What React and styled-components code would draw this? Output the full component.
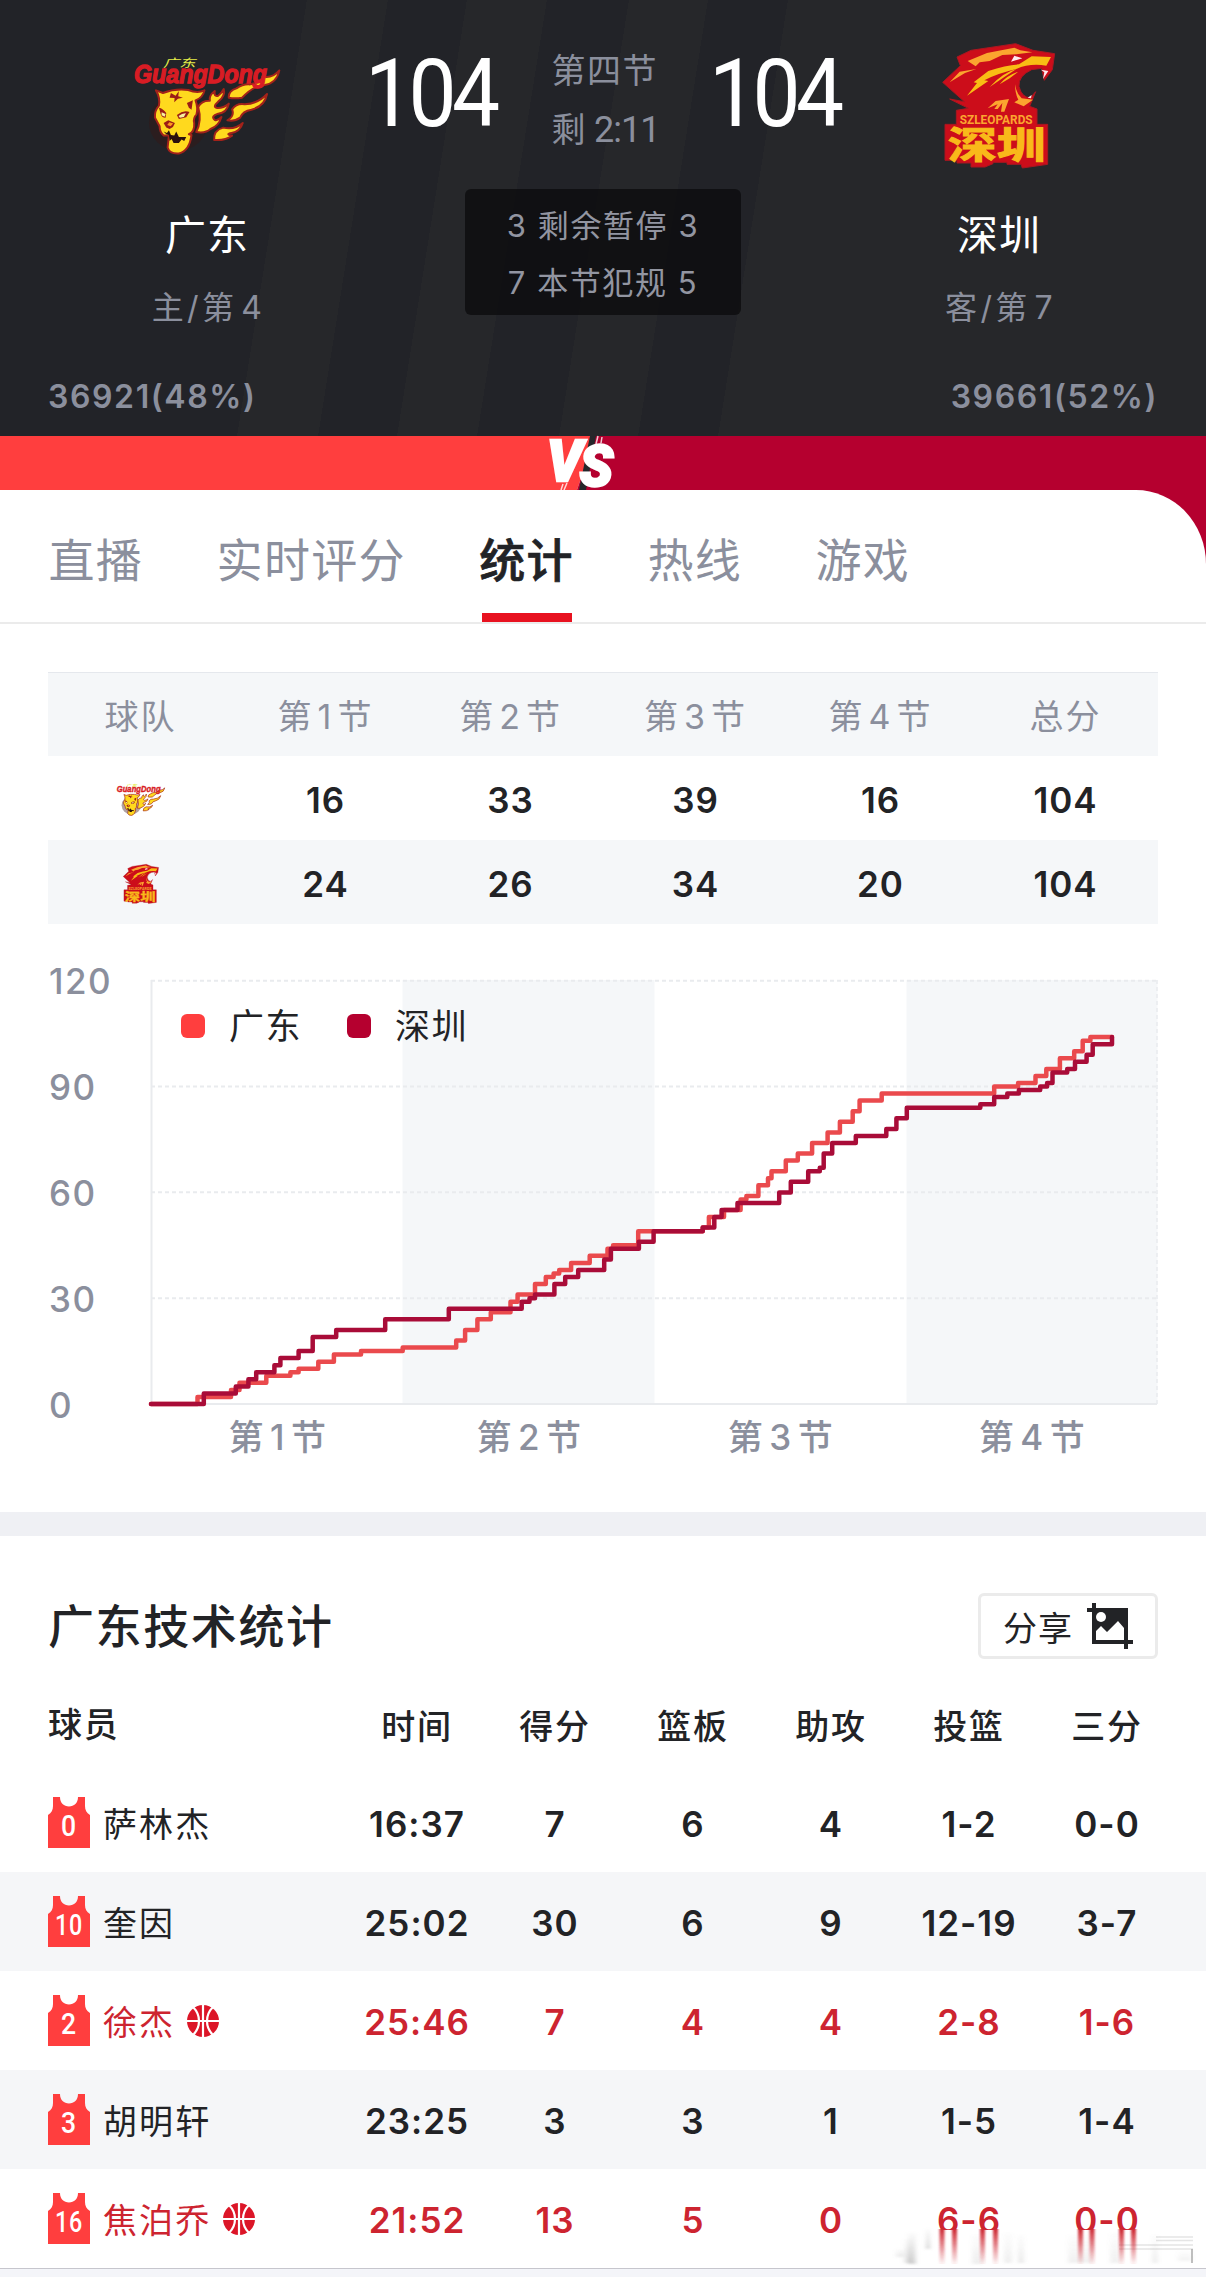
import React from 'react';
import styled, { createGlobalStyle } from 'styled-components';

const GlobalStyle = createGlobalStyle`
  * {
    box-sizing: border-box;
  }

  body {
    margin: 0;
    background: #ffffff;
    color: #222326;
    font-family: Inter, "Noto Sans CJK SC", sans-serif;
  }

  svg {
    overflow: visible;
  }
`;

const GREY = '#8b8f9d';
const HOME = '#ff3e3e';
const AWAY = '#b5002f';

const quarters = [
  { team: 'home', scores: [16, 33, 39, 16, 104] },
  { team: 'away', scores: [24, 26, 34, 20, 104] },
];

const players = [
  { no: 0, name: '萨林杰', stats: ['16:37', '7', '6', '4', '1-2', '0-0'] },
  { no: 10, name: '奎因', stats: ['25:02', '30', '6', '9', '12-19', '3-7'] },
  { no: 2, name: '徐杰', onCourt: true, stats: ['25:46', '7', '4', '4', '2-8', '1-6'] },
  { no: 3, name: '胡明轩', stats: ['23:25', '3', '3', '1', '1-5', '1-4'] },
  { no: 16, name: '焦泊乔', onCourt: true, stats: ['21:52', '13', '5', '0', '6-6', '0-0'] },
];

// [x, score] at every change of score
const homeRun = [
  [46.5, 2], [80, 4], [88.5, 6], [115.3, 8], [139.4, 9], [147.6, 10], [167.3, 12], [182.9, 14],
  [210, 15], [251.7, 16], [305.2, 18], [314.1, 21], [326.4, 24], [339.8, 26], [359.5, 29],
  [366.6, 31], [384, 34], [394.8, 36], [402.6, 37], [408.2, 38], [420.1, 40], [438.7, 42],
  [456.5, 44], [462.1, 45], [487.2, 49], [551.7, 50], [557.9, 53], [573, 55], [589.6, 58],
  [595.4, 59], [607.4, 62], [617, 64], [620.5, 66], [634.8, 69], [646.8, 71], [661.1, 74],
  [676.6, 77], [688.9, 80], [701.7, 83], [708.6, 86], [730.7, 88], [843.2, 90], [867.1, 91],
  [884.5, 93], [895.3, 95], [908.9, 98], [923.2, 100], [931.7, 103], [939.4, 104], [961, 104],
];

const awayRun = [
  [52.8, 3], [84.8, 5], [97.4, 7], [105.2, 9], [123.4, 11], [129.4, 13], [147.6, 15], [161.7, 19],
  [185.2, 21], [234.2, 24], [297.8, 27], [370.7, 29], [378.5, 30], [384, 31], [403.4, 34],
  [414.2, 36], [427.2, 38], [453.2, 41], [459.9, 44], [487.9, 46], [502.6, 49], [551.7, 50],
  [563.3, 53], [570.6, 55], [586.5, 57], [628.2, 60], [639.8, 63], [657.2, 66], [668.8, 67],
  [672.7, 71], [681.2, 74], [704.8, 76], [735.3, 78], [745.4, 81], [755.8, 84], [829.3, 85],
  [843.2, 87], [856.3, 88], [867.9, 89], [889.2, 90], [896.1, 91], [901.5, 94], [916.2, 95],
  [924, 97], [935.6, 99], [941.7, 102], [961, 104],
];

const scoreY = (score) => 424 - score * 3.5275;

const stepPath = (run) =>
  'M0 424' + run.map(([x, score]) => `H${x}V${scoreY(score).toFixed(1)}`).join('');

const HomeLogo = ({ width, height }) => (
  <svg width={width} height={height} viewBox="400 165 436 297">
    <ellipse cx="530" cy="365" rx="88" ry="84" fill="#3a1512" opacity="0.4" />
    <text x="484" y="197" fontSize="34" fontStyle="italic" textLength="98" lengthAdjust="spacingAndGlyphs"
      fill="#e6ee48" fontFamily="'Noto Sans CJK SC', sans-serif">广东</text>
    <g fill="#ffd91e" stroke="#a3221a" strokeWidth="6" strokeLinejoin="round">
      <path d="M590 318Q600 298 625 299Q622 283 640 270Q636 288 650 284Q662 275 667 264Q672 286 650 302Q632 318 647 321Q665 322 682 308Q676 335 650 338Q626 346 640 357Q650 360 660 348Q652 375 627 384Q612 398 584 393Q602 360 590 318Z" />
      <path d="M682 290Q680 270 705 262Q725 248 746 250Q786 240 782 226Q812 234 834 208Q826 246 790 252Q756 254 722 290Q700 294 682 290Z" />
      <path d="M678 358Q700 345 692 325Q705 306 730 310Q770 308 797 279Q790 316 750 326Q724 330 716 350Q700 362 678 358Z" />
      <path d="M638 417Q636 388 665 380Q700 388 724 366Q716 392 690 396Q670 400 692 404Q670 420 638 417Z" />
      <path d="M463 268L484 276Q520 262 560 267Q588 278 609 268Q604 290 582 298Q590 320 585 340Q574 352 578 366Q580 392 562 400L570 402Q564 450 532 458Q504 460 498 440L502 404L486 404Q474 394 474 376L460 350Q458 330 472 314Q476 290 463 268Z" />
    </g>
    <g fill="#9b1d16">
      <path d="M508 276L522 284L532 270L530 286L544 290L529 293L518 304L519 291L504 290Z" />
      <path d="M472 320Q484 322 494 336L492 350Q480 350 477 338Z" />
      <path d="M526 342Q545 326 564 333L554 349L532 354Z" />
      <path d="M556 306L574 298L570 326L562 320Z" />
      <path d="M486 366L500 358L520 366L514 378L504 384L494 380Z" />
    </g>
    <path d="M480 334l12 5l-3 8l-9-4ZM531 345q12-9 22-8l-6 11l-12 2Z" fill="#f6f2a0" />
    <path d="M503 364l12 4l-8 8l-10-4Z" fill="#ff9a1e" />
    <path d="M486 392l10 4l6-8l6 14l10 2l6-12l8 16l22 0l-6 12l-8-4l-8 10l-16 0l-6-12l-6 6l-2-18l-8-2Z" fill="#2a0f0d" />
    <text x="397" y="247" fontSize="80" fontWeight="900" fontStyle="italic" textLength="400"
      lengthAdjust="spacingAndGlyphs" fill="#d81c24" stroke="#d81c24" strokeWidth="4"
      fontFamily="'Liberation Sans', sans-serif">GuangDong</text>
  </svg>
);

const AwayLogo = ({ width, height }) => (
  <svg width={width} height={height} viewBox="217 128 342 378">
    <path
      d="M219 246L272 196L262 170L304 150L438 130L490 150L555 160L548 208L524 240L516 204L486 208Q446 226 448 258Q456 292 482 292L498 274L480 318L502 326V372H534V492L458 503L454 492H412V486H370V490L346 500H304V488H262V480H226V372H260V330L296 324L240 296L284 304Z"
      fill="#cc0d1a" stroke="#a81720" strokeWidth="3"
    />
    <g fill="#fba52f">
      <path d="M294 182L352 158L434 142L452 150L488 156L440 162L398 164L360 182L330 186L318 198Z" />
      <path d="M240 246L270 214L320 206L286 218Z" />
      <path d="M354 324L378 302L418 296L404 334H394L398 308L384 326L374 326L384 312Z" />
      <path d="M436 252Q440 280 456 294L490 298L462 318L434 306L446 298Q436 280 436 252Z" />
    </g>
    <g fill="#f9bd14">
      <path d="M312 246L356 212Q410 194 448 192L486 168L544 170L530 196Q480 188 440 206Q380 220 344 240L356 242L292 286L322 248Z" />
      <path d="M360 260Q400 216 440 206L404 230ZM390 252Q410 226 446 214L420 234Z" />
    </g>
    <path d="M424 184L434 166L458 174L438 180ZM514 208L536 212L520 236L524 216ZM474 292L486 284L484 294Z" fill="#ffe9ee" />
    <text x="270" y="371" fontSize="41" fontWeight="700" textLength="219" lengthAdjust="spacingAndGlyphs"
      fill="#fba52f" fontFamily="Roboto, sans-serif">SZLEOPARDS</text>
    <text x="234" y="476" fontSize="112" fontWeight="700" textLength="294" lengthAdjust="spacingAndGlyphs"
      fill="#f9b91a" stroke="#f9b91a" strokeWidth="3" fontFamily="'Noto Sans CJK SC', sans-serif">深圳</text>
  </svg>
);

const Jersey = ({ no }) => (
  <svg width="42" height="51" viewBox="0 0 42 51">
    <path d="M5 0H12C12 6 16 9.500 21 9.500S30 6 30 0H37V9C37 13 38.500 16 42 18V51H0V18C3.500 16 5 13 5 9Z" fill={HOME} />
    <text x="21" y="39" fontSize="30" fontWeight="500" textAnchor="middle" fill="#ffffff"
      fontFamily="Roboto, sans-serif" textLength={no > 9 ? 28 : 16} lengthAdjust="spacingAndGlyphs">{no}</text>
  </svg>
);

const Basketball = () => (
  <svg width="32" height="32" viewBox="0 0 32 32">
    <circle cx="16" cy="16" r="16" fill="#dc1628" />
    <path d="M16 0V32M0 16H32M6 2C14 10 14 22 6 30M26 2C18 10 18 22 26 30" fill="none" stroke="#ffffff" strokeWidth="2.200" />
  </svg>
);

const ShareIcon = () => (
  <svg width="46" height="46" viewBox="0 0 46 46">
    <path d="M5 0H9V5H41V37H46V41H41V46H37V41H5V9H0V5H5Z" fill="#222326" />
    <ellipse cx="14" cy="14" rx="5" ry="5" fill="#ffffff" />
    <path d="M9 28L14 23L20 29L31 18L37 25V37H9Z" fill="#ffffff" />
  </svg>
);

const VsMark = () => (
  <svg width="66" height="54" viewBox="0 0 66 54">
    <path d="M0 0H45L27 54H0Z" fill={HOME} />
    <path d="M45 0H66V54H27Z" fill={AWAY} />
    <path d="M40 0H46L36 54H29Z" fill="#25262a" />
    <text x="-3" y="45" fontSize="58" fontWeight="900" fontStyle="italic" fill="#ffffff" stroke="#ffffff"
      strokeWidth="2.500" textLength="66" lengthAdjust="spacingAndGlyphs" fontFamily="Roboto, sans-serif">
      V<tspan dx="-3" dy="5">S</tspan>
    </text>
    <path d="M13 48L11 54M17 47L14 54M48 0L46 8M52 1L51 7" stroke="#ffffff" strokeWidth="1.500" opacity="0.8" />
  </svg>
);

const ScoreChart = () => (
  <svg width="1110" height="500" viewBox="-103 -20 1110 500">
    <rect x="251.500" y="0" width="252" height="424" fill="#f5f7f9" />
    <rect x="755.500" y="0" width="251" height="424" fill="#f5f7f9" />
    {[120, 90, 60, 30].map((s) => (
      <path key={s} d={`M0 ${scoreY(s)}H1006`} stroke="#e9ebee" strokeWidth="2" strokeDasharray="4 3" />
    ))}
    <path d="M1006 0V424" stroke="#e9ebee" strokeWidth="1.500" strokeDasharray="4 3" />
    <path d="M0.500 0V424H1006" fill="none" stroke="#e9ebee" strokeWidth="2" />
    {[120, 90, 60, 30, 0].map((s) => (
      <AxisText key={s} x="-102" y={scoreY(s) + 13.5}>{s}</AxisText>
    ))}
    {[1, 2, 3, 4].map((q) => (
      <AxisText key={q} x={251.5 * q - 124.5} y="470" textAnchor="middle">
        第<tspan dx="5">{q}</tspan><tspan dx="5">节</tspan>
      </AxisText>
    ))}
    <RunLine d={stepPath(homeRun)} stroke="#ea4a4d" />
    <RunLine d={stepPath(awayRun)} stroke="#a90c38" />
  </svg>
);

// fading streaks over the last two cells of the table
const Smear = () => (
  <svg width="310" height="40" viewBox="0 0 310 40">
    <defs>
      <linearGradient id="fadeRed" x1="0" y1="0" x2="0" y2="1">
        <stop offset="0" stopColor="#cf2a35" />
        <stop offset="1" stopColor="#cf2a35" stopOpacity="0.05" />
      </linearGradient>
      <linearGradient id="fadeGrey" x1="0" y1="0" x2="0" y2="1">
        <stop offset="0" stopColor="#999999" stopOpacity="0.05" />
        <stop offset="1" stopColor="#888888" stopOpacity="0.35" />
      </linearGradient>
      <filter id="soft"><feGaussianBlur stdDeviation="2 0.800" /></filter>
      <filter id="softRed"><feGaussianBlur stdDeviation="0.900 0.300" /></filter>
    </defs>
    <rect x="0" y="3" width="310" height="37" fill="#ffffff" />
    <g fill="url(#fadeGrey)" filter="url(#soft)">
      <rect x="2" y="22" width="8" height="8" opacity="0.5" />
      <rect x="10" y="12" width="8" height="24" opacity="0.6" />
      <rect x="14" y="6" width="8" height="31" />
      <rect x="32" y="2" width="4" height="20" />
      <rect x="78" y="8" width="10" height="29" opacity="0.4" />
      <rect x="110" y="6" width="8" height="30" opacity="0.4" />
      <rect x="124" y="8" width="6" height="28" opacity="0.5" />
      <rect x="174" y="8" width="24" height="28" opacity="0.35" />
      <rect x="216" y="6" width="10" height="30" opacity="0.35" />
      <rect x="258" y="8" width="6" height="28" opacity="0.4" />
      <rect x="284" y="24" width="14" height="10" opacity="0.3" />
    </g>
    <path d="M262 10H299M262 13.500H299M225 18H299M225 22H299" stroke="#999999" strokeOpacity="0.250" strokeWidth="1.500" />
    <path d="M298 22V36" stroke="#aaaaaa" strokeWidth="1.500" />
    <g fill="url(#fadeRed)" filter="url(#softRed)">
      {[45.5, 58, 86, 99, 184, 195.5, 225, 237].map((x) => (
        <rect key={x} x={x} y="2" width="5" height="35" />
      ))}
    </g>
  </svg>
);

const TeamInfo = ({ logo, name, side, rank }) => (
  <Team>
    <LogoSlot>{logo}</LogoSlot>
    <TeamName>{name}</TeamName>
    <TeamRank>{side}/第<Num>{rank}</Num></TeamRank>
  </Team>
);

export default function App() {
  return (
    <Page>
      <GlobalStyle />
      <Header>
        <Board>
          <TeamInfo logo={<HomeLogo width={145} height={99} />} name="广东" side="主" rank={4} />
          <Centre>
            <ScoreLine>
              <Score>104</Score>
              <Clock>
                <span>第四节</span>
                <span>剩 <Remaining>2:11</Remaining></span>
              </Clock>
              <Score>104</Score>
            </ScoreLine>
            <Fouls>
              <span>3 剩余暂停 3</span>
              <span>7 本节犯规 5</span>
            </Fouls>
          </Centre>
          <TeamInfo logo={<AwayLogo width={114} height={126} />} name="深圳" side="客" rank={7} />
        </Board>
        <Support>
          <span>36921(48%)</span>
          <span>39661(52%)</span>
        </Support>
      </Header>
      <VsBar>
        <VsSide $width={550} $color={HOME} />
        <VsMark />
        <VsSide $color={AWAY} />
      </VsBar>
      <TabsBack>
        <Tabs>
          <Tab>直播</Tab>
          <Tab>实时评分</Tab>
          <Tab $active>统计</Tab>
          <Tab>热线</Tab>
          <Tab>游戏</Tab>
        </Tabs>
      </TabsBack>
      <Overview>
        <QuarterTable>
          <QuarterRow $head>
            <QuarterHead>球队</QuarterHead>
            {[1, 2, 3, 4].map((q) => (
              <QuarterHead key={q}>第<Num>{q}</Num>节</QuarterHead>
            ))}
            <QuarterHead>总分</QuarterHead>
          </QuarterRow>
          {quarters.map(({ team, scores }) => (
            <QuarterRow key={team} $shaded={team === 'away'}>
              <QuarterCell>
                {team === 'home' ? <HomeLogo width={48} height={33} /> : <AwayLogo width={36} height={40} />}
              </QuarterCell>
              {scores.map((score, i) => (
                <QuarterCell key={i}>{score}</QuarterCell>
              ))}
            </QuarterRow>
          ))}
        </QuarterTable>
        <ChartBox>
          <ScoreChart />
          <Legend>
            <LegendItem><Swatch $color={HOME} />广东</LegendItem>
            <LegendItem><Swatch $color={AWAY} />深圳</LegendItem>
          </Legend>
        </ChartBox>
      </Overview>
      <Divider />
      <StatsHead>
        <Title>广东技术统计</Title>
        <ShareButton>分享<ShareIcon /></ShareButton>
      </StatsHead>
      <PlayerHead>
        <span>球员</span>
        {['时间', '得分', '篮板', '助攻', '投篮', '三分'].map((t) => (
          <StatCell key={t}>{t}</StatCell>
        ))}
      </PlayerHead>
      {players.map((p, i) => (
        <PlayerRow key={p.no} $shaded={i % 2 === 1} $onCourt={p.onCourt}>
          <Player>
            <Jersey no={p.no} />
            <PlayerName>{p.name}</PlayerName>
            {p.onCourt && <Basketball />}
          </Player>
          {p.stats.map((s, j) => (
            <StatCell key={j}>{s}</StatCell>
          ))}
          {i === players.length - 1 && <SmearSlot><Smear /></SmearSlot>}
        </PlayerRow>
      ))}
      <Footer />
    </Page>
  );
}

const Page = styled.div`
  width: 1206px;
  height: 2277px;
  overflow: hidden;
  background: #ffffff;
`;

const Header = styled.header`
  height: 436px;
  background: linear-gradient(
    99.1deg,
    #222328 303px,
    #26272a 303px 383px,
    #222328 383px 461px,
    #26272a 461px 540px,
    #222328 540px 621px,
    #26272a 621px 699px,
    #222328 699px 778px,
    #26272a 778px
  );
`;

const Board = styled.div`
  display: grid;
  grid-template-columns: 318px minmax(0, 1fr) 318px;
  padding: 0 48px;
  height: 370px;
`;

const Team = styled.div`
  display: flex;
  flex-direction: column;
  align-items: center;
  padding-top: 36px;
`;

const LogoSlot = styled.div`
  display: flex;
  align-items: center;
  height: 139px;
`;

const TeamName = styled.div`
  margin-top: 30px;
  line-height: 60px;
  font-size: 41px;
  letter-spacing: 1px;
  color: #ffffff;
`;

const TeamRank = styled.div`
  margin-top: 23px;
  padding-left: 7px;
  line-height: 40px;
  font-size: 32px;
  letter-spacing: 3.3px;
  color: ${GREY};
`;

const Num = styled.span`
  margin: 0 4px;
`;

const Centre = styled.div`
  display: flex;
  flex-direction: column;
  align-items: center;
`;

const ScoreLine = styled.div`
  display: flex;
  justify-content: center;
  gap: 53px;
  height: 189px;
  padding: 41px 3px 0 0;
`;

const Score = styled.div`
  width: 130px;
  line-height: 106px;
  font-family: Roboto, sans-serif;
  font-size: 94px;
  letter-spacing: -5px;
  color: #ffffff;
  transform: scaleX(0.91);
  transform-origin: left;
`;

const Clock = styled.div`
  display: flex;
  flex-direction: column;
  line-height: 59px;
  margin-right: -4px;
  padding-left: 4px;
  font-size: 34px;
  letter-spacing: 1.5px;
  white-space: nowrap;
  color: ${GREY};
`;

const Remaining = styled.span`
  margin-left: -4px;
  font-family: Roboto, sans-serif;
  font-size: 36px;
  letter-spacing: -1px;
`;

const Fouls = styled.div`
  display: flex;
  flex-direction: column;
  align-items: center;
  width: 276px;
  height: 126px;
  padding-top: 8px;
  border-radius: 6px;
  background: rgba(8, 8, 10, 0.7);
  line-height: 57px;
  font-size: 31px;
  letter-spacing: 1.6px;
  color: #9295a1;
`;

const Support = styled.div`
  display: flex;
  justify-content: space-between;
  padding: 7px 48px 0 48px;
  line-height: 40px;
  font-size: 32px;
  font-weight: 600;
  letter-spacing: 1.6px;
  color: ${GREY};
`;

const VsBar = styled.div`
  display: flex;
  height: 54px;
`;

const VsSide = styled.div`
  flex: ${(p) => (p.$width ? `0 0 ${p.$width}px` : '1')};
  background: ${(p) => p.$color};
`;

const TabsBack = styled.div`
  background: ${AWAY};
`;

const Tabs = styled.nav`
  display: flex;
  gap: 73.5px;
  height: 134px;
  padding-left: 48.5px;
  border-bottom: 2px solid #ebebeb;
  border-top-right-radius: 70px 74px;
  background: #ffffff;
`;

const Tab = styled.div`
  height: 132px;
  line-height: 140px;
  font-size: 46px;
  letter-spacing: 1.3px;
  font-weight: ${(p) => (p.$active ? 500 : 400)};
  color: ${(p) => (p.$active ? '#222326' : GREY)};

  ${(p) => p.$active && `
    -webkit-text-stroke: 0.7px #222326;
    background: linear-gradient(#e81220, #e81220) center bottom / 90px 9px no-repeat;
  `}
`;

const Overview = styled.section`
  height: 888px;
  padding: 48px 48px 0;
`;

const QuarterTable = styled.div`
  display: flex;
  flex-direction: column;
`;

const QuarterRow = styled.div`
  display: grid;
  grid-template-columns: repeat(6, 1fr);
  align-items: center;
  height: 84px;
  border-top: ${(p) => (p.$head ? '1px solid #e5e8ed' : 'none')};
  background: ${(p) => (p.$head || p.$shaded ? '#f5f7f9' : '#ffffff')};
`;

const QuarterHead = styled.div`
  padding-bottom: 1px;
  text-align: center;
  font-size: 34px;
  letter-spacing: 2px;
  color: ${GREY};
`;

const QuarterCell = styled.div`
  display: flex;
  justify-content: center;
  padding-top: 3px;
  font-size: 35px;
  font-weight: 600;
  letter-spacing: 1px;
`;

const ChartBox = styled.div`
  position: relative;
  padding-top: 36px;
`;

const AxisText = styled.text`
  font-size: 35px;
  font-weight: 500;
  letter-spacing: 1.5px;
  fill: ${GREY};
`;

const RunLine = styled.path`
  fill: none;
  stroke-width: 4.5;
  stroke-linejoin: round;
  stroke-linecap: round;
`;

const Legend = styled.div`
  position: absolute;
  top: 78px;
  left: 133px;
  display: flex;
  gap: 45px;
`;

const LegendItem = styled.div`
  display: flex;
  align-items: center;
  line-height: 48px;
  font-size: 35px;
  letter-spacing: 1.5px;
`;

const Swatch = styled.i`
  width: 24px;
  height: 24px;
  margin-right: 24px;
  border-radius: 6px;
  background: ${(p) => p.$color};
`;

const Divider = styled.div`
  height: 24px;
  background: #eff0f4;
`;

const StatsHead = styled.div`
  display: flex;
  justify-content: space-between;
  align-items: center;
  height: 142px;
  padding: 38px 48px 0;
`;

const Title = styled.h2`
  margin: 0;
  padding-bottom: 6px;
  font-size: 46px;
  font-weight: 500;
  letter-spacing: 1.6px;
`;

const ShareButton = styled.button`
  display: flex;
  align-items: center;
  gap: 14px;
  width: 180px;
  height: 66px;
  padding: 0 0 0 22px;
  border: 3px solid #ebebeb;
  border-radius: 6px;
  background: #ffffff;
  color: #222326;
  font-family: inherit;
  font-size: 34px;
  letter-spacing: 1px;
`;

const PlayerHead = styled.div`
  display: grid;
  grid-template-columns: 299px repeat(6, 138px);
  align-items: center;
  height: 95px;
  padding: 0 0 6px 48px;
  font-size: 34px;
  font-weight: 500;
  letter-spacing: 1.8px;
`;

const StatCell = styled.span`
  padding: 3px 0 0 2px;
  text-align: center;
`;

const PlayerRow = styled.div`
  position: relative;
  display: grid;
  grid-template-columns: 299px repeat(6, 138px);
  align-items: center;
  height: 99px;
  padding-left: 48px;
  font-size: 35px;
  font-weight: 600;
  letter-spacing: 1px;
  color: ${(p) => (p.$onCourt ? '#cd2430' : '#222326')};
  background: ${(p) => (p.$shaded ? '#f5f6f8' : '#ffffff')};
`;

const Player = styled.div`
  display: flex;
  align-items: center;
`;

const PlayerName = styled.span`
  margin: 0 12px 0 13px;
  font-size: 34px;
  font-weight: 400;
  letter-spacing: 2.1px;
`;

const SmearSlot = styled.div`
  position: absolute;
  right: 2px;
  bottom: 1px;
  height: 40px;
`;

const Footer = styled.div`
  height: 10px;
  border-top: 1px solid #c6c6cd;
  background: #f4f5f9;
`;
